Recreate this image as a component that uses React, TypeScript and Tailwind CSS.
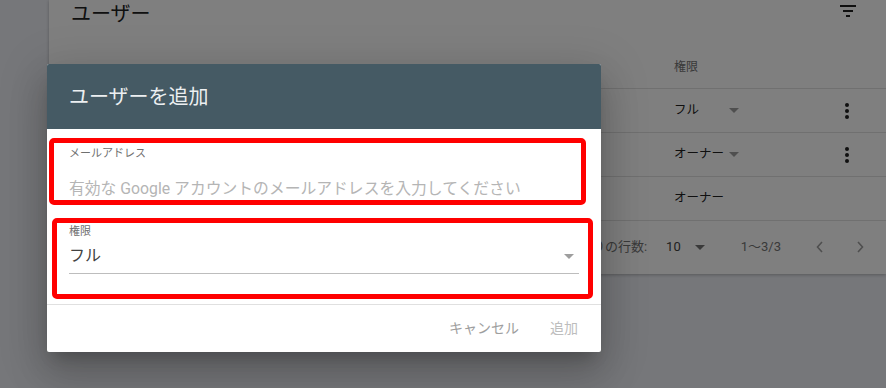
import React from 'react'

function Caret({ className = '' }: { className?: string }) {
  return (
    <svg width="10" height="5" viewBox="0 0 10 5" className={className}>
      <path d="M0 0h10L5 5z" fill="currentColor" />
    </svg>
  )
}

function Dots() {
  return (
    <svg width="4" height="16" viewBox="0 0 4 16" className="text-[#212121]">
      <circle cx="2" cy="2" r="2" fill="currentColor" />
      <circle cx="2" cy="8" r="2" fill="currentColor" />
      <circle cx="2" cy="14" r="2" fill="currentColor" />
    </svg>
  )
}

export default function App() {
  // email column sits under the dialog, so only the role column is shown
  const rows = [
    { id: 1, role: 'フル', caret: true, menu: true },
    { id: 2, role: 'オーナー', caret: true, menu: true },
    { id: 3, role: 'オーナー', caret: false, menu: false },
  ]

  return (
    <div className="relative h-[388px] w-[886px] overflow-hidden bg-[#eceef4] font-[Roboto,'Noto_Sans_CJK_JP',sans-serif]">
      {/* Users card (behind the dialog) */}
      <div className="ml-[49px] h-[274px] w-[837px] bg-white shadow-[0_1px_3px_rgba(0,0,0,0.25)]">
        <div className="flex h-[45px] items-start justify-between pl-[22px] pr-[30px]">
          <div className="mt-[2px] text-[20px] leading-[24px] text-[#212121]">ユーザー</div>
          <svg width="16" height="12" viewBox="0 0 16 12" className="mt-[5px] text-[#212121]">
            <rect x="0" y="0" width="16" height="2" fill="currentColor" />
            <rect x="3" y="5" width="10" height="2" fill="currentColor" />
            <rect x="6" y="10" width="4" height="2" fill="currentColor" />
          </svg>
        </div>

        <div className="flex h-[44px] items-center border-b border-[#e0e0e0] text-[12px] text-[#757575]">
          <div className="w-[625px] shrink-0" />
          <div className="w-[150px] shrink-0">権限</div>
        </div>

        {rows.map((r) => (
          <div key={r.id} className="flex h-[44px] items-center border-b border-[#e0e0e0] text-[12.5px] text-[#212121]">
            <div className="w-[625px] shrink-0" />
            <div className="flex w-[150px] shrink-0 items-center whitespace-nowrap">
              <span className="w-[55px]">{r.role}</span>
              {r.caret && <Caret className="text-[#9e9e9e]" />}
            </div>
            <div className="flex flex-1 items-center pl-[21px]">{r.menu && <Dots />}</div>
          </div>
        ))}

        <div className="flex h-[52px] items-center justify-end whitespace-nowrap pr-[22px] text-[13px] text-[#757575]">
          <span>1 ページあたりの行数:</span>
          <span className="ml-[19px] text-[#424242]">10</span>
          <Caret className="ml-[14px] text-[#757575]" />
          <span className="ml-[36px]">1〜3/3</span>
          <svg width="8" height="12" viewBox="0 0 8 12" className="ml-[35px] text-[#9e9e9e]">
            <path d="M6 1L1.5 6 6 11" fill="none" stroke="currentColor" strokeWidth="1.6" />
          </svg>
          <svg width="8" height="12" viewBox="0 0 8 12" className="ml-[32px] text-[#9e9e9e]">
            <path d="M2 1l4.5 5L2 11" fill="none" stroke="currentColor" strokeWidth="1.6" />
          </svg>
        </div>
      </div>

      {/* Scrim */}
      <div className="absolute inset-0 bg-black/50" />

      {/* Dialog */}
      <div className="absolute left-[47px] top-[64px] w-[554px] rounded-[2px] bg-white shadow-[0_11px_15px_-7px_rgba(0,0,0,0.2),0_24px_38px_3px_rgba(0,0,0,0.14),0_9px_46px_8px_rgba(0,0,0,0.12)]">
        <div className="flex h-[65px] items-center rounded-t-[2px] bg-[#455a64] pl-[22px] text-[20px] text-[#eceff1]">
          ユーザーを追加
        </div>

        <div className="px-[22px] pb-[30px] pt-[18px]">
          <div className="text-[11px] leading-[14px] text-[#6f6f6f]">メールアドレス</div>
          <div className="mt-[16px] whitespace-nowrap text-[15.8px] leading-[24px] text-[#b5b5b5]">
            有効な Google アカウントのメールアドレスを入力してください
          </div>

          <div className="mt-[24px] text-[11px] leading-[14px] text-[#6f6f6f]">権限</div>
          <div className="mt-[5px] flex items-center justify-between border-b border-[#bdbdbd] pb-[5px]">
            <span className="text-[16px] leading-[24px] text-[#424242]">フル</span>
            <Caret className="mr-[5px] text-[#9e9e9e]" />
          </div>
        </div>

        <div className="flex h-[48px] items-center justify-end gap-[31px] border-t border-[#e0e0e0] pr-[23px] text-[14px] text-[#9e9e9e]">
          <span>キャンセル</span>
          <span className="text-[#bdbdbd]">追加</span>
        </div>

        {/* Red annotation frames */}
        <div className="absolute left-[2px] top-[74px] h-[67px] w-[537px] rounded-[5px] border-[5px] border-[#ff0000]" />
        <div className="absolute left-[5px] top-[154px] h-[81px] w-[541px] rounded-[5px] border-[5px] border-[#ff0000]" />
      </div>
    </div>
  )
}
